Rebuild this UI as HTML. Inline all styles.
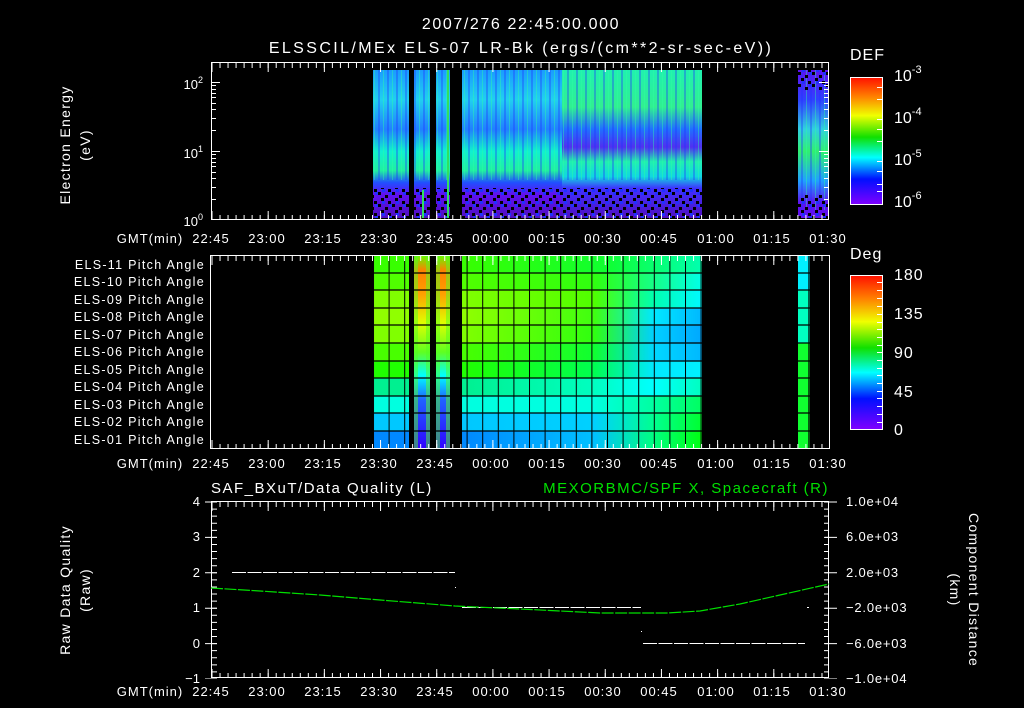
<!DOCTYPE html>
<html><head><meta charset="utf-8"><style>
html,body{margin:0;padding:0;background:#000;}
svg{display:block;}
text{font-family:"Liberation Sans",sans-serif;fill:#fff;}
</style></head><body>
<svg width="1024" height="708" viewBox="0 0 1024 708" xmlns="http://www.w3.org/2000/svg">
<defs>
 <linearGradient id="cb" x1="0" y1="0" x2="0" y2="1">
  <stop offset="0" stop-color="#ff1000"/><stop offset="0.15" stop-color="#ff8000"/><stop offset="0.3" stop-color="#f0ff00"/>
  <stop offset="0.47" stop-color="#10e000"/><stop offset="0.63" stop-color="#00ffff"/><stop offset="0.8" stop-color="#0010ff"/><stop offset="1" stop-color="#8000ff"/>
 </linearGradient>
 <linearGradient id="spA" x1="0" y1="0" x2="0" y2="1">
  <stop offset="0" stop-color="#1a9cff"/><stop offset="0.2" stop-color="#20d0f0"/><stop offset="0.4" stop-color="#2080ff"/>
  <stop offset="0.55" stop-color="#10f0d0"/><stop offset="0.68" stop-color="#20f0a0"/><stop offset="0.76" stop-color="#2050ff"/>
  <stop offset="0.84" stop-color="#6010f0"/><stop offset="1" stop-color="#5010c0"/>
 </linearGradient>
 <linearGradient id="spB" x1="0" y1="0" x2="0" y2="1">
  <stop offset="0" stop-color="#20f0b0"/><stop offset="0.25" stop-color="#30f090"/><stop offset="0.4" stop-color="#2070ff"/>
  <stop offset="0.52" stop-color="#5030f0"/><stop offset="0.62" stop-color="#20f0b0"/><stop offset="0.72" stop-color="#10d8e0"/>
  <stop offset="0.8" stop-color="#4030ff"/><stop offset="1" stop-color="#5010c0"/>
 </linearGradient>
 <linearGradient id="spC" x1="0" y1="0" x2="0" y2="1">
  <stop offset="0" stop-color="#6010f0"/><stop offset="0.2" stop-color="#3040ff"/><stop offset="0.4" stop-color="#30d0e0"/>
  <stop offset="0.55" stop-color="#30f070"/><stop offset="0.75" stop-color="#20a0ff"/><stop offset="0.9" stop-color="#6010f0"/><stop offset="1" stop-color="#6010f0"/>
 </linearGradient>
 <pattern id="spk" x="0" y="0" width="14" height="12" patternUnits="userSpaceOnUse">
  <rect x="0" y="0" width="3" height="3" fill="#000"/><rect x="7" y="3" width="3" height="3" fill="#000"/>
  <rect x="3" y="6" width="3" height="3" fill="#000"/><rect x="10" y="9" width="3" height="3" fill="#000"/>
  <rect x="11" y="0" width="3" height="3" fill="#2030ff"/><rect x="4" y="9" width="3" height="3" fill="#2030ff"/>
 </pattern>
 <pattern id="str" x="0" y="0" width="9" height="37" patternUnits="userSpaceOnUse">
  <rect x="0" y="0" width="2" height="37" fill="#2030ff" opacity="0.35"/><rect x="5" y="0" width="1" height="37" fill="#30ffa0" opacity="0.4"/>
 </pattern>
 <pattern id="gridV" x="373" y="0" width="15.6" height="708" patternUnits="userSpaceOnUse"><rect x="0" y="0" width="1" height="708" fill="#000"/></pattern>
 <linearGradient id="stripeV" x1="0" y1="0" x2="0" y2="1">
  <stop offset="0" stop-color="#60ff00"/><stop offset="0.08" stop-color="#ff8000"/><stop offset="0.2" stop-color="#ffa000"/>
  <stop offset="0.35" stop-color="#e0ff00"/><stop offset="0.5" stop-color="#60ff20"/><stop offset="0.62" stop-color="#00ffff"/>
  <stop offset="0.75" stop-color="#2060ff"/><stop offset="1" stop-color="#3000ff"/>
 </linearGradient>
</defs>

<!-- Titles -->
<text x="521" y="29" font-size="16" letter-spacing="1.6" text-anchor="middle">2007/276 22:45:00.000</text>
<text x="521" y="53" font-size="16" letter-spacing="2.4" text-anchor="middle">ELSSCIL/MEx ELS-07 LR-Bk  (ergs/(cm**2-sr-sec-eV))</text>

<!-- Panel 1 data -->
<g>
 <rect x="373" y="70" width="36" height="148" fill="url(#spA)"/>
 <rect x="414" y="70" width="16" height="148" fill="url(#spA)"/>
 <rect x="436" y="70" width="14" height="148" fill="url(#spA)"/>
 <rect x="462" y="70" width="100" height="148" fill="url(#spA)"/>
 <rect x="562" y="70" width="140" height="148" fill="url(#spB)"/>
 <rect x="798" y="70" width="31" height="148" fill="url(#spC)"/>
 <g fill="url(#str)">
  <rect x="373" y="70" width="36" height="110"/><rect x="414" y="70" width="16" height="110"/><rect x="436" y="70" width="14" height="110"/><rect x="462" y="70" width="240" height="110"/><rect x="798" y="70" width="31" height="140"/>
 </g>
 <g fill="url(#spk)">
  <rect x="373" y="188" width="36" height="30"/><rect x="414" y="188" width="16" height="30"/><rect x="436" y="188" width="14" height="30"/><rect x="462" y="188" width="240" height="30"/>
  <rect x="798" y="70" width="31" height="20"/><rect x="798" y="195" width="31" height="23"/>
 </g>
 <rect x="422" y="190" width="2" height="28" fill="#30e060"/>
 <rect x="447" y="70" width="2" height="148" fill="#30e060"/>
</g>
<!-- Panel 1 frame & ticks -->
<rect x="211.5" y="62.5" width="617" height="157" fill="none" stroke="#fff"/>
<g stroke="#fff">
 <path d="M211.5 65.5H829" stroke-width="5" stroke-dasharray="1,7.026"/>
 <path d="M211.5 67.5H829" stroke-width="9" stroke-dasharray="1,55.18"/>
 <path d="M211.5 217.5H829" stroke-width="5" stroke-dasharray="1,7.026"/>
 <path d="M211.5 215.5H829" stroke-width="9" stroke-dasharray="1,55.18"/>
</g>
<g stroke="#fff" stroke-width="1">
 <path d="M211 82.5h9M211 151.5h9M211 219.5h9M819 82.5h10M819 151.5h10"/>
 <path d="M211 199.5h5M211 187.5h5M211 178.5h5M211 172.5h5M211 166.5h5M211 162.5h5M211 158.5h5M211 154.5h5M211 130.5h5M211 118.5h5M211 109.5h5M211 103.5h5M211 97.5h5M211 93.5h5M211 89.5h5M211 85.5h5"/>
 <path d="M824 199.5h5M824 187.5h5M824 178.5h5M824 172.5h5M824 166.5h5M824 162.5h5M824 158.5h5M824 154.5h5M824 130.5h5M824 118.5h5M824 109.5h5M824 103.5h5M824 97.5h5M824 93.5h5M824 89.5h5M824 85.5h5"/>
</g>
<text x="203" y="89" font-size="13" text-anchor="end">10<tspan font-size="9" dy="-6">2</tspan></text>
<text x="203" y="158" font-size="13" text-anchor="end">10<tspan font-size="9" dy="-6">1</tspan></text>
<text x="203" y="226" font-size="13" text-anchor="end">10<tspan font-size="9" dy="-6">0</tspan></text>
<text transform="translate(70,145) rotate(-90)" font-size="14" letter-spacing="1.3" text-anchor="middle">Electron Energy</text>
<text transform="translate(90,145) rotate(-90)" font-size="14" letter-spacing="1.3" text-anchor="middle">(eV)</text>

<!-- DEF colorbar -->
<text x="850" y="60" font-size="16" letter-spacing="1">DEF</text>
<rect x="850.5" y="77.5" width="32" height="127" fill="url(#cb)" stroke="#fff"/>
<g stroke="#fff"><path d="M877 87.5h5M877 99.5h5M877 119.5h5M877 129.5h5M877 141.5h5M877 161.5h5M877 171.5h5M877 184.5h5M877 191.5h5"/></g>
<text x="894" y="81" font-size="16">10<tspan font-size="11" dy="-8">-3</tspan></text>
<text x="894" y="123" font-size="16">10<tspan font-size="11" dy="-8">-4</tspan></text>
<text x="894" y="165" font-size="16">10<tspan font-size="11" dy="-8">-5</tspan></text>
<text x="894" y="207" font-size="16">10<tspan font-size="11" dy="-8">-6</tspan></text>

<!-- Time labels -->
<g font-size="13" letter-spacing="1" text-anchor="middle">
 <text x="150" y="243">GMT(min)</text>
 <text x="211" y="243">22:45</text><text x="267" y="243">23:00</text><text x="323" y="243">23:15</text><text x="379" y="243">23:30</text><text x="435" y="243">23:45</text><text x="491" y="243">00:00</text><text x="547" y="243">00:15</text><text x="603" y="243">00:30</text><text x="659" y="243">00:45</text><text x="716" y="243">01:00</text><text x="772" y="243">01:15</text><text x="828" y="243">01:30</text>
</g>
<g font-size="13" letter-spacing="1" text-anchor="middle">
 <text x="150" y="468">GMT(min)</text>
 <text x="211" y="468">22:45</text><text x="267" y="468">23:00</text><text x="323" y="468">23:15</text><text x="379" y="468">23:30</text><text x="435" y="468">23:45</text><text x="491" y="468">00:00</text><text x="547" y="468">00:15</text><text x="603" y="468">00:30</text><text x="659" y="468">00:45</text><text x="716" y="468">01:00</text><text x="772" y="468">01:15</text><text x="828" y="468">01:30</text>
</g>
<g font-size="13" letter-spacing="1" text-anchor="middle">
 <text x="150" y="696">GMT(min)</text>
 <text x="211" y="696">22:45</text><text x="267" y="696">23:00</text><text x="323" y="696">23:15</text><text x="379" y="696">23:30</text><text x="435" y="696">23:45</text><text x="491" y="696">00:00</text><text x="547" y="696">00:15</text><text x="603" y="696">00:30</text><text x="659" y="696">00:45</text><text x="716" y="696">01:00</text><text x="772" y="696">01:15</text><text x="828" y="696">01:30</text>
</g>

<!-- Panel 2 data -->
<defs>
 <linearGradient id="r11" x1="0" x2="1"><stop offset="0" stop-color="#38ff00"/><stop offset="0.6" stop-color="#10ff30"/><stop offset="1" stop-color="#00ffb0"/></linearGradient>
 <linearGradient id="r10" x1="0" x2="1"><stop offset="0" stop-color="#50ff00"/><stop offset="0.55" stop-color="#30ff10"/><stop offset="1" stop-color="#00ffe8"/></linearGradient>
 <linearGradient id="r9" x1="0" x2="1"><stop offset="0" stop-color="#80ff00"/><stop offset="0.55" stop-color="#50ff00"/><stop offset="0.8" stop-color="#00ffb0"/><stop offset="1" stop-color="#00f8ff"/></linearGradient>
 <linearGradient id="r8" x1="0" x2="1"><stop offset="0" stop-color="#90ff00"/><stop offset="0.55" stop-color="#40ff10"/><stop offset="0.8" stop-color="#00e8ff"/><stop offset="1" stop-color="#00b8ff"/></linearGradient>
 <linearGradient id="r7" x1="0" x2="1"><stop offset="0" stop-color="#80ff00"/><stop offset="0.55" stop-color="#30ff10"/><stop offset="0.8" stop-color="#00d0ff"/><stop offset="1" stop-color="#00a8ff"/></linearGradient>
 <linearGradient id="r6" x1="0" x2="1"><stop offset="0" stop-color="#48ff00"/><stop offset="0.55" stop-color="#10ff30"/><stop offset="0.8" stop-color="#00d8ff"/><stop offset="1" stop-color="#00b8ff"/></linearGradient>
 <linearGradient id="r5" x1="0" x2="1"><stop offset="0" stop-color="#20ff00"/><stop offset="0.55" stop-color="#00ff50"/><stop offset="0.8" stop-color="#00e8ff"/><stop offset="1" stop-color="#00f0ff"/></linearGradient>
 <linearGradient id="r4" x1="0" x2="1"><stop offset="0" stop-color="#00f090"/><stop offset="0.55" stop-color="#00ffc0"/><stop offset="0.8" stop-color="#00ffff"/><stop offset="1" stop-color="#00ffc0"/></linearGradient>
 <linearGradient id="r3" x1="0" x2="1"><stop offset="0" stop-color="#00ffe0"/><stop offset="0.55" stop-color="#00ffe0"/><stop offset="0.8" stop-color="#00ffa0"/><stop offset="1" stop-color="#00ff60"/></linearGradient>
 <linearGradient id="r2" x1="0" x2="1"><stop offset="0" stop-color="#00c8ff"/><stop offset="0.55" stop-color="#00d0ff"/><stop offset="0.8" stop-color="#00ff90"/><stop offset="1" stop-color="#00ff30"/></linearGradient>
 <linearGradient id="r1" x1="0" x2="1"><stop offset="0" stop-color="#0088ff"/><stop offset="0.55" stop-color="#00c0ff"/><stop offset="0.8" stop-color="#00ff80"/><stop offset="1" stop-color="#00ff10"/></linearGradient>
</defs>
<g>
 <rect x="373" y="255" width="36" height="18" fill="#38ff00"/><rect x="373" y="273" width="36" height="18" fill="#50ff00"/><rect x="373" y="290" width="36" height="18" fill="#80ff00"/><rect x="373" y="308" width="36" height="18" fill="#90ff00"/><rect x="373" y="325" width="36" height="18" fill="#80ff00"/><rect x="373" y="343" width="36" height="18" fill="#48ff00"/><rect x="373" y="361" width="36" height="18" fill="#20ff00"/><rect x="373" y="378" width="36" height="18" fill="#00f090"/><rect x="373" y="396" width="36" height="18" fill="#00ffe0"/><rect x="373" y="413" width="36" height="18" fill="#00c8ff"/><rect x="373" y="431" width="36" height="18" fill="#0088ff"/>
 <rect x="414" y="255" width="16" height="194" fill="url(#stripeV)"/>
 <rect x="436" y="255" width="14" height="194" fill="url(#stripeV)"/>
 <rect x="414" y="255" width="4" height="194" fill="#50ff20" opacity="0.5"/><rect x="426" y="255" width="4" height="194" fill="#50ff20" opacity="0.5"/>
 <rect x="436" y="255" width="4" height="194" fill="#50ff20" opacity="0.5"/><rect x="446" y="255" width="4" height="194" fill="#50ff20" opacity="0.5"/>
 <rect x="462" y="255" width="240" height="18" fill="url(#r11)"/>
 <rect x="462" y="273" width="240" height="18" fill="url(#r10)"/>
 <rect x="462" y="290" width="240" height="18" fill="url(#r9)"/>
 <rect x="462" y="308" width="240" height="18" fill="url(#r8)"/>
 <rect x="462" y="325" width="240" height="18" fill="url(#r7)"/>
 <rect x="462" y="343" width="240" height="18" fill="url(#r6)"/>
 <rect x="462" y="361" width="240" height="18" fill="url(#r5)"/>
 <rect x="462" y="378" width="240" height="18" fill="url(#r4)"/>
 <rect x="462" y="396" width="240" height="18" fill="url(#r3)"/>
 <rect x="462" y="413" width="240" height="18" fill="url(#r2)"/>
 <rect x="462" y="431" width="240" height="18" fill="url(#r1)"/>
 <rect x="798" y="255" width="12" height="35" fill="#00f0ff"/><rect x="798" y="290" width="12" height="53" fill="#00ffc0"/><rect x="798" y="343" width="12" height="106" fill="#10ff30"/>
 <rect x="373" y="255" width="36" height="194" fill="url(#gridV)"/>
 <rect x="462" y="255" width="240" height="194" fill="url(#gridV)"/>
 <g stroke="#000" stroke-width="1.3">
  <path d="M373 273h337M373 290h337M373 308h337M373 325h337M373 343h337M373 361h337M373 378h337M373 396h337M373 413h337M373 431h337"/>
  <path d="M798 273h12M798 290h12M798 308h12M798 325h12M798 343h12M798 361h12M798 378h12M798 396h12M798 413h12M798 431h12M809 255v194"/>
 </g>
</g>
<rect x="210.5" y="255.5" width="619" height="193" fill="none" stroke="#fff"/>
<g stroke="#fff">
 <path d="M211.5 258.5H829" stroke-width="5" stroke-dasharray="1,7.026"/>
 <path d="M211.5 260.5H829" stroke-width="9" stroke-dasharray="1,55.18"/>
 <path d="M211.5 446.5H829" stroke-width="5" stroke-dasharray="1,7.026"/>
 <path d="M211.5 444.5H829" stroke-width="9" stroke-dasharray="1,55.18"/>
</g>
<g font-size="12.5" letter-spacing="1.3" text-anchor="end">
 <text x="205" y="269">ELS-11 Pitch Angle</text><text x="205" y="286">ELS-10 Pitch Angle</text><text x="205" y="304">ELS-09 Pitch Angle</text><text x="205" y="321">ELS-08 Pitch Angle</text><text x="205" y="339">ELS-07 Pitch Angle</text><text x="205" y="356">ELS-06 Pitch Angle</text><text x="205" y="374">ELS-05 Pitch Angle</text><text x="205" y="391">ELS-04 Pitch Angle</text><text x="205" y="409">ELS-03 Pitch Angle</text><text x="205" y="426">ELS-02 Pitch Angle</text><text x="205" y="444">ELS-01 Pitch Angle</text>
</g>
<!-- Deg colorbar -->
<text x="850" y="259" font-size="16" letter-spacing="1">Deg</text>
<rect x="850.5" y="275.5" width="32" height="154" fill="url(#cb)" stroke="#fff"/>
<g stroke="#fff"><path d="M877 282.5h5M877 290.5h5M877 298.5h5M877 306.5h5M877 314.5h5M877 322.5h5M877 329.5h5M877 337.5h5M877 345.5h5M877 352.5h5M877 360.5h5M877 368.5h5M877 375.5h5M877 383.5h5M877 391.5h5M877 398.5h5M877 406.5h5M877 414.5h5M877 422.5h5"/></g>
<g font-size="16" letter-spacing="1"><text x="894" y="280">180</text><text x="894" y="319">135</text><text x="894" y="358">90</text><text x="894" y="397">45</text><text x="894" y="435">0</text></g>

<!-- Panel 3 -->
<text x="211" y="493" font-size="15" letter-spacing="1.5">SAF_BXuT/Data Quality (L)</text>
<text x="829" y="493" font-size="15" letter-spacing="1.5" text-anchor="end" style="fill:#00e000">MEXORBMC/SPF X, Spacecraft (R)</text>
<rect x="211.5" y="501.5" width="617" height="176" fill="none" stroke="#fff"/>
<g stroke="#fff">
 <path d="M211.5 504.5H829" stroke-width="5" stroke-dasharray="1,7.026"/>
 <path d="M211.5 506.5H829" stroke-width="9" stroke-dasharray="1,55.18"/>
 <path d="M211.5 675.5H829" stroke-width="5" stroke-dasharray="1,7.026"/>
 <path d="M211.5 673.5H829" stroke-width="9" stroke-dasharray="1,55.18"/>
 <path d="M214.5 501.5V679" stroke-width="5" stroke-dasharray="1,6.08"/>
 <path d="M211 501.5V679" stroke-width="12" stroke-dasharray="1,34.4"/>
 <path d="M826.5 501.5V679" stroke-width="5" stroke-dasharray="1,6.08"/>
 <path d="M831 501.5V679" stroke-width="12" stroke-dasharray="1,34.4"/>
</g>
<g font-size="13" text-anchor="end">
 <text x="200" y="506">4</text><text x="200" y="541">3</text><text x="200" y="577">2</text><text x="200" y="612">1</text><text x="200" y="648">0</text><text x="200" y="683">−1</text>
</g>
<g font-size="13" letter-spacing="0.8">
 <text x="846" y="506">1.0e+04</text><text x="846" y="541">6.0e+03</text><text x="846" y="577">2.0e+03</text><text x="846" y="612">−2.0e+03</text><text x="846" y="648">−6.0e+03</text><text x="846" y="683">−1.0e+04</text>
</g>
<text transform="translate(70,590) rotate(-90)" font-size="14" letter-spacing="1.3" text-anchor="middle">Raw Data Quality</text>
<text transform="translate(90,590) rotate(-90)" font-size="14" letter-spacing="1.3" text-anchor="middle">(Raw)</text>
<text transform="translate(969,590) rotate(90)" font-size="14" letter-spacing="1.3" text-anchor="middle">Component Distance</text>
<text transform="translate(950,590) rotate(90)" font-size="14" letter-spacing="1.3" text-anchor="middle">(km)</text>
<g stroke="#fff" stroke-width="1" stroke-dasharray="14,1.5">
 <path d="M232 572.5H455M462 607.5H641M643 643.5H805"/>
</g>
<rect x="455" y="587" width="1" height="1" fill="#fff"/><rect x="641" y="631" width="1" height="1" fill="#fff"/><rect x="807" y="607" width="2" height="1" fill="#fff"/>
<path d="M211 588 L260 591 L320 595 L380 600 L455 606 L520 609 L600 613 L667 613 L700 611 L740 604 L780 595 L829 584" fill="none" stroke="#00e000" stroke-width="1.2" stroke-dasharray="12,1.5"/>
</svg>
</body></html>
